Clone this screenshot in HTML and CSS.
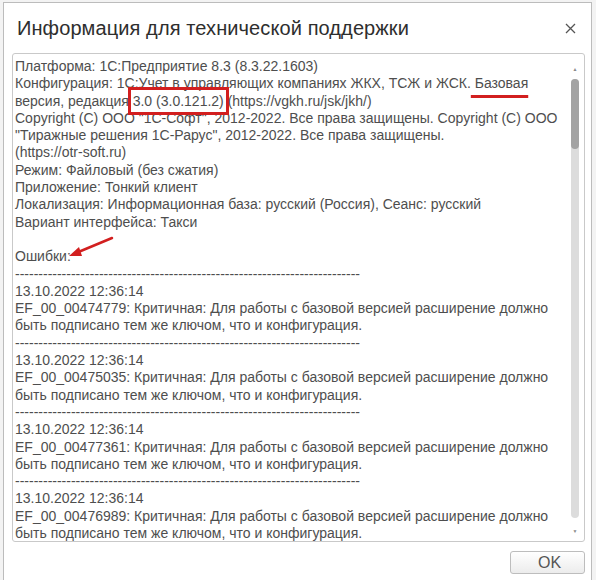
FILE: index.html
```html
<!DOCTYPE html>
<html lang="ru">
<head>
    <meta charset="UTF-8">
    <meta name="viewport" content="width=device-width, initial-scale=1.0">
    <title>Информация для технической поддержки</title>
    <link rel="stylesheet" href="styles.css">
</head>
<body>
    <div class="dialog">
        <div class="dialog-header">
            <h1>Информация для технической поддержки</h1>
            <button class="close-btn" title="Закрыть">
                <svg width="11" height="11" viewBox="0 0 11 11">
                    <path d="M1 1 L10 10 M10 1 L1 10" stroke="#555" stroke-width="1.3" fill="none"/>
                </svg>
            </button>
        </div>

        <div class="info-box">
            <div class="info-text">
                <div>Платформа: 1С:Предприятие 8.3 (8.3.22.1603)</div>
                <div>Конфигурация: 1С:Учет в управляющих компаниях ЖКХ, ТСЖ и ЖСК.<span class="mark-line"> Базовая</span></div>
                <div>версия, редакция <span class="mark-box">3.0 (3.0.121.2)</span> (https://vgkh.ru/jsk/jkh/)</div>
                <div>Copyright (C) ООО "1С-Софт", 2012-2022. Все права защищены. Copyright (C) ООО</div>
                <div>"Тиражные решения 1С-Рарус", 2012-2022. Все права защищены.</div>
                <div>(https://otr-soft.ru)</div>
                <div>Режим: Файловый (без сжатия)</div>
                <div>Приложение: Тонкий клиент</div>
                <div>Локализация: Информационная база: русский (Россия), Сеанс: русский</div>
                <div>Вариант интерфейса: Такси</div>
                <div>&nbsp;</div>
                <div>Ошибки:</div>
                <div class="sep">--------------------------------------------------------------------------</div>
                <div>13.10.2022 12:36:14</div>
                <div>EF_00_00474779: Критичная: Для работы с базовой версией расширение должно</div>
                <div>быть подписано тем же ключом, что и конфигурация.</div>
                <div class="sep">--------------------------------------------------------------------------</div>
                <div>13.10.2022 12:36:14</div>
                <div>EF_00_00475035: Критичная: Для работы с базовой версией расширение должно</div>
                <div>быть подписано тем же ключом, что и конфигурация.</div>
                <div class="sep">--------------------------------------------------------------------------</div>
                <div>13.10.2022 12:36:14</div>
                <div>EF_00_00477361: Критичная: Для работы с базовой версией расширение должно</div>
                <div>быть подписано тем же ключом, что и конфигурация.</div>
                <div class="sep">--------------------------------------------------------------------------</div>
                <div>13.10.2022 12:36:14</div>
                <div>EF_00_00476989: Критичная: Для работы с базовой версией расширение должно</div>
                <div>быть подписано тем же ключом, что и конфигурация.</div>
            </div>

            <div class="scrollbar">
                <div class="scroll-arrow">&#9650;</div>
                <div class="scroll-track">
                    <div class="scroll-thumb"></div>
                </div>
                <div class="scroll-arrow">&#9660;</div>
            </div>

            <!-- red arrow pointing at "Ошибки" -->
            <svg class="mark-arrow" width="50" height="24" viewBox="0 0 50 24">
                <path d="M46 2 L10 17" stroke="#d21f1f" stroke-width="2.5" fill="none" stroke-linecap="round"/>
                <path d="M3 20 L13 11 L16 20 Z" fill="#d21f1f"/>
            </svg>
        </div>

        <div class="dialog-footer">
            <button class="ok-btn">OK</button>
        </div>
    </div>
</body>
</html>
```

FILE: styles.css
```css
:root {
    --border-color: #c9c9c9;
    --text-color: #4e4e4e;
    --title-color: #2e2e2e;
    --mark-color: #d21f1f;
}

body {
    margin: 0;
    padding: 2px 4px 0 3px;
    background-color: #f3f3f3;
    font-family: 'Liberation Sans', Arial, sans-serif;
    height: 580px;
    box-sizing: border-box;
    overflow: hidden;
}

.dialog {
    height: 100%;
    background-color: #ffffff;
    border: 1px solid #bcbcbc;
    border-bottom: none;
    padding: 0 6px 0 8px;
    box-sizing: border-box;
}

.dialog-header {
    display: flex;
    align-items: center;
    justify-content: space-between;
    height: 50px;
    padding-left: 5px;
}

h1 {
    margin: 0;
    font-size: 20px;
    font-weight: normal;
    color: var(--title-color);
    letter-spacing: 0.1px;
}

.close-btn {
    background: none;
    border: none;
    padding: 0;
    margin-right: 8px;
    margin-top: 1px;
    width: 14px;
    height: 14px;
    display: flex;
    align-items: center;
    justify-content: center;
    cursor: pointer;
}

.info-box {
    position: relative;
    display: flex;
    height: 489px;
    border: 1px solid var(--border-color);
    border-radius: 3px;
    box-sizing: border-box;
    overflow: hidden;
}

.info-text {
    flex: 1;
    padding: 4px 0 0 2px;
    font-size: 14px;
    line-height: 17.3px;
    color: var(--text-color);
    white-space: nowrap;
}

.sep {
    overflow: hidden;
}

.mark-box {
    outline: 3px solid var(--mark-color);
    outline-offset: 2px;
    padding: 1px 0;
}

.mark-line {
    text-decoration: underline;
    text-decoration-color: var(--mark-color);
    text-decoration-thickness: 3px;
    text-underline-offset: 7px;
    text-decoration-skip-ink: none;
}

.scrollbar {
    width: 14px;
    display: flex;
    flex-direction: column;
    align-items: center;
    padding: 10px 2px 5px 0;
}

.scroll-arrow {
    font-size: 5px;
    color: #8a8a8a;
    height: 10px;
    line-height: 10px;
}

.scroll-track {
    flex: 1;
    width: 8px;
    margin: 5px 0 8px;
    background-color: #dcdcdc;
    border-radius: 4px;
}

.scroll-thumb {
    height: 70px;
    background-color: #a3a3a3;
    border-radius: 4px;
}

.mark-arrow {
    position: absolute;
    left: 53px;
    top: 182px;
}

.dialog-footer {
    display: flex;
    justify-content: flex-end;
    padding-top: 9px;
}

.ok-btn {
    width: 75px;
    height: 23px;
    background: linear-gradient(#ffffff, #ececec);
    border: 1px solid #bdbdbd;
    border-radius: 3px;
    font-family: 'Liberation Sans', Arial, sans-serif;
    font-size: 16px;
    color: #555555;
    padding: 0 0 0 4px;
    cursor: pointer;
}
```
